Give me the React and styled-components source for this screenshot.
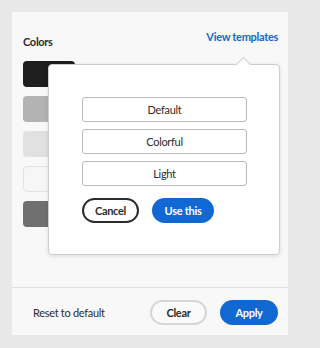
import React from "react";
import styled, { createGlobalStyle } from "styled-components";

const Global = createGlobalStyle`
  html, body { margin: 0; padding: 0; background: #e8e8e8; }
  body { font-family: Lato, "Noto Sans", sans-serif; color: #2c2c2c; letter-spacing: -0.3px; }
  * { box-sizing: border-box; }
`;

const Page = styled.div`
  width: 300px;
  height: 348px;
  padding: 12px 12px 13px 12px;
`;

const Card = styled.div`
  position: relative;
  width: 276px;
  height: 323px;
  background: #f8f8f8;
  display: flex;
  flex-direction: column;
`;

const Body = styled.div`
  flex: 1;
  padding: 20px 10px 0 11px;
  display: flex;
  flex-direction: column;
`;

const Header = styled.div`
  display: flex;
  justify-content: space-between;
  align-items: flex-start;
  height: 29px;
`;

const Title = styled.div`
  font-size: 11px;
  font-weight: 700;
  line-height: 14px;
  margin-top: 3px;
  color: #2c2c2c;
`;

const Link = styled.a`
  font-size: 11px;
  font-weight: 700;
  line-height: 14px;
  margin-top: -2px;
  color: #1268d3;
  text-decoration: none;
`;

const Swatches = styled.div`
  display: flex;
  flex-direction: column;
  gap: 9.5px;
`;

const Swatch = styled.div`
  width: 52px;
  height: 25.5px;
  border-radius: 4px;
  background: ${(p) => p.$c};
  border: ${(p) => (p.$outlined ? "1px solid #e2e2e2" : "none")};
`;

const Footer = styled.div`
  height: 48px;
  border-top: 1.5px solid #e1e1e1;
  display: flex;
  align-items: center;
  padding: 2px 10px 0 21px;
  gap: 13px;
`;

const Reset = styled.div`
  flex: 1;
  font-size: 11px;
  color: #2c2c2c;
`;

const Pill = styled.button`
  height: 25px;
  width: ${(p) => p.$w}px;
  padding: 0;
  border-radius: 13px;
  font-family: inherit;
  font-size: 11px;
  letter-spacing: -0.3px;
  font-weight: 700;
  cursor: pointer;
  border: 2px solid ${(p) =>
    p.$variant === "primary" ? "#1268d3" : p.$variant === "dark" ? "#2c2c2c" : "#d6d6d6"};
  background: ${(p) => (p.$variant === "primary" ? "#1268d3" : p.$variant === "dark" ? "#ffffff" : "#fafafa")};
  color: ${(p) => (p.$variant === "primary" ? "#ffffff" : "#2c2c2c")};
`;

const Popover = styled.div`
  position: absolute;
  left: 36px;
  top: 52px;
  width: 232px;
  height: 191px;
  background: #ffffff;
  border: 1px solid #cdcdcd;
  border-radius: 4px;
  box-shadow: 0 1px 4px rgba(0, 0, 0, 0.12);
  padding: 32px 0 0 33px;
  display: flex;
  flex-direction: column;
`;

const Tip = styled.div`
  position: absolute;
  left: 189px;
  top: -6px;
  width: 11px;
  height: 11px;
  background: #ffffff;
  border-left: 1px solid #cdcdcd;
  border-top: 1px solid #cdcdcd;
  transform: rotate(45deg);
`;

const Templates = styled.div`
  display: flex;
  flex-direction: column;
  gap: 7px;
`;

const TemplateButton = styled.button`
  width: 165px;
  height: 25px;
  border: 1px solid #b9b9b9;
  border-radius: 3px;
  background: #ffffff;
  font-family: inherit;
  font-size: 11px;
  letter-spacing: -0.3px;
  color: #2c2c2c;
  cursor: pointer;
`;

const Actions = styled.div`
  display: flex;
  gap: 13px;
  margin-top: 12px;
`;

const swatches = [
  { c: "#1e1e1e" },
  { c: "#b3b3b3" },
  { c: "#e1e1e1" },
  { c: "#f6f6f6", outlined: true },
  { c: "#707070" },
];

export default function App() {
  return (
    <>
      <Global />
      <Page>
        <Card>
          <Body>
            <Header>
              <Title>Colors</Title>
              <Link href="#">View templates</Link>
            </Header>
            <Swatches>
              {swatches.map((s, i) => (
                <Swatch key={i} $c={s.c} $outlined={s.outlined} />
              ))}
            </Swatches>
          </Body>
          <Footer>
            <Reset>Reset to default</Reset>
            <Pill $w={57}>Clear</Pill>
            <Pill $w={58} $variant="primary">Apply</Pill>
          </Footer>
          <Popover>
            <Tip />
            <Templates>
              <TemplateButton>Default</TemplateButton>
              <TemplateButton>Colorful</TemplateButton>
              <TemplateButton>Light</TemplateButton>
            </Templates>
            <Actions>
              <Pill $w={57} $variant="dark">Cancel</Pill>
              <Pill $w={62} $variant="primary">Use this</Pill>
            </Actions>
          </Popover>
        </Card>
      </Page>
    </>
  );
}
